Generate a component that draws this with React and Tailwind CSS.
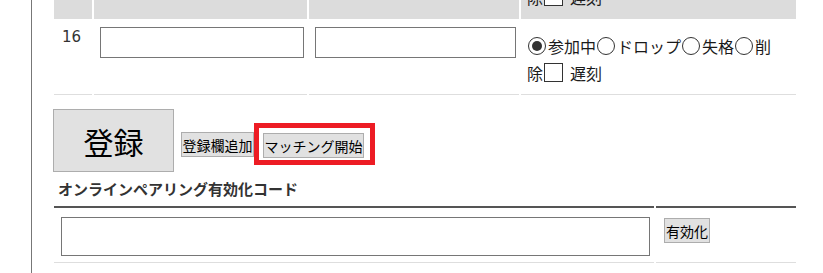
import React from 'react';

// radio / checkbox drawn with plain spans so the size matches the screenshot
const Radio = ({ checked }) => (
  <span className="inline-flex items-center justify-center w-[18px] h-[18px] rounded-full border border-[#333] bg-white ml-[1px] mr-[2px] shrink-0">
    {checked && <span className="w-[10px] h-[10px] rounded-full bg-[#333]" />}
  </span>
);

const Checkbox = () => (
  <span className="inline-block w-[19px] h-[19px] border border-[#333] bg-white ml-[1px] shrink-0" />
);

const EntryRow = ({ no, gray }) => {
  const cell = gray
    ? 'bg-[#dcdcdc] border-b border-[#dcdcdc]'
    : 'bg-white border-b border-[#dedede]';

  return (
    <>
      <div className={`${cell} pl-[8px] pt-[6px] text-[15px] leading-[20px] font-['DejaVu_Sans',sans-serif] text-[#333]`}>
        {no}
      </div>
      <div className={`${cell} pl-[6px] pt-[6px]`}>
        <input type="text" className="w-[204px] h-[31px] border border-[#767676] bg-white" />
      </div>
      <div className={`${cell} pl-[6px] pt-[6px]`}>
        <input type="text" className="w-[201px] h-[31px] border border-[#767676] bg-white" />
      </div>
      <div className={`${cell} pl-[6px] pt-[11px] text-[16px] text-[#1a1a1a]`}>
        <div className="flex items-center h-[27px] whitespace-nowrap">
          <Radio checked />
          <span>参加中</span>
          <Radio />
          <span>ドロップ</span>
          <Radio />
          <span>失格</span>
          <Radio />
          <span>削</span>
        </div>
        <div className="flex items-center h-[27px] whitespace-nowrap">
          <span>除</span>
          <Checkbox />
          <span className="ml-[7px]">遅刻</span>
        </div>
      </div>
    </>
  );
};

const Btn = ({ className = '', children }) => (
  <button
    type="button"
    className={`flex items-center justify-center bg-[#e1e1e1] border border-[#adadad] text-black leading-none ${className}`}
  >
    {children}
  </button>
);

export default function App() {
  return (
    <div className="w-[823px] h-[273px] overflow-hidden bg-white font-['Noto_Sans_CJK_JP',sans-serif]">
      <div className="flex flex-col ml-[31px] border-l border-[#777] pl-[22px] min-h-[273px]">
        {/* entry table, previous row runs off the top */}
        <div className="grid grid-cols-[38px_213px_210px_275px] auto-rows-[74px] gap-[2px] -mt-[55px]">
          <EntryRow no="15" gray />
          <EntryRow no="16" />
        </div>

        {/* buttons */}
        <div className="flex items-start mt-[14px] -ml-[1px]">
          <Btn className="w-[121px] h-[63px] text-[30px]">登録</Btn>
          <Btn className="w-[73px] h-[25px] text-[14px] ml-[7px] mt-[23px]">登録欄追加</Btn>
          <div className="relative ml-[9px] mt-[24px]">
            <Btn className="w-[101px] h-[25px] text-[14px]">マッチング開始</Btn>
            <span className="absolute -left-[9px] -top-[10px] -right-[11px] -bottom-[7px] border-[5px] border-[#ed1c24] pointer-events-none" />
          </div>
        </div>

        {/* online pairing */}
        <div className="mt-[7px] ml-[4px] text-[15px] leading-[20px] font-bold text-[#333]">
          オンラインペアリング有効化コード
        </div>
        <div className="grid grid-cols-[600px_140px] gap-[2px] mt-[7px]">
          <div className="border-t-2 border-b border-t-[#555] border-b-[#dedede] pl-[7px] pr-[4px] pt-[9px] pb-[6px]">
            <input type="text" className="w-full h-[39px] border border-[#767676] bg-white" />
          </div>
          <div className="border-t-2 border-b border-t-[#555] border-b-[#dedede] pl-[8px] pt-[10px]">
            <Btn className="w-[46px] h-[25px] text-[14px]">有効化</Btn>
          </div>
        </div>
      </div>
    </div>
  );
}
